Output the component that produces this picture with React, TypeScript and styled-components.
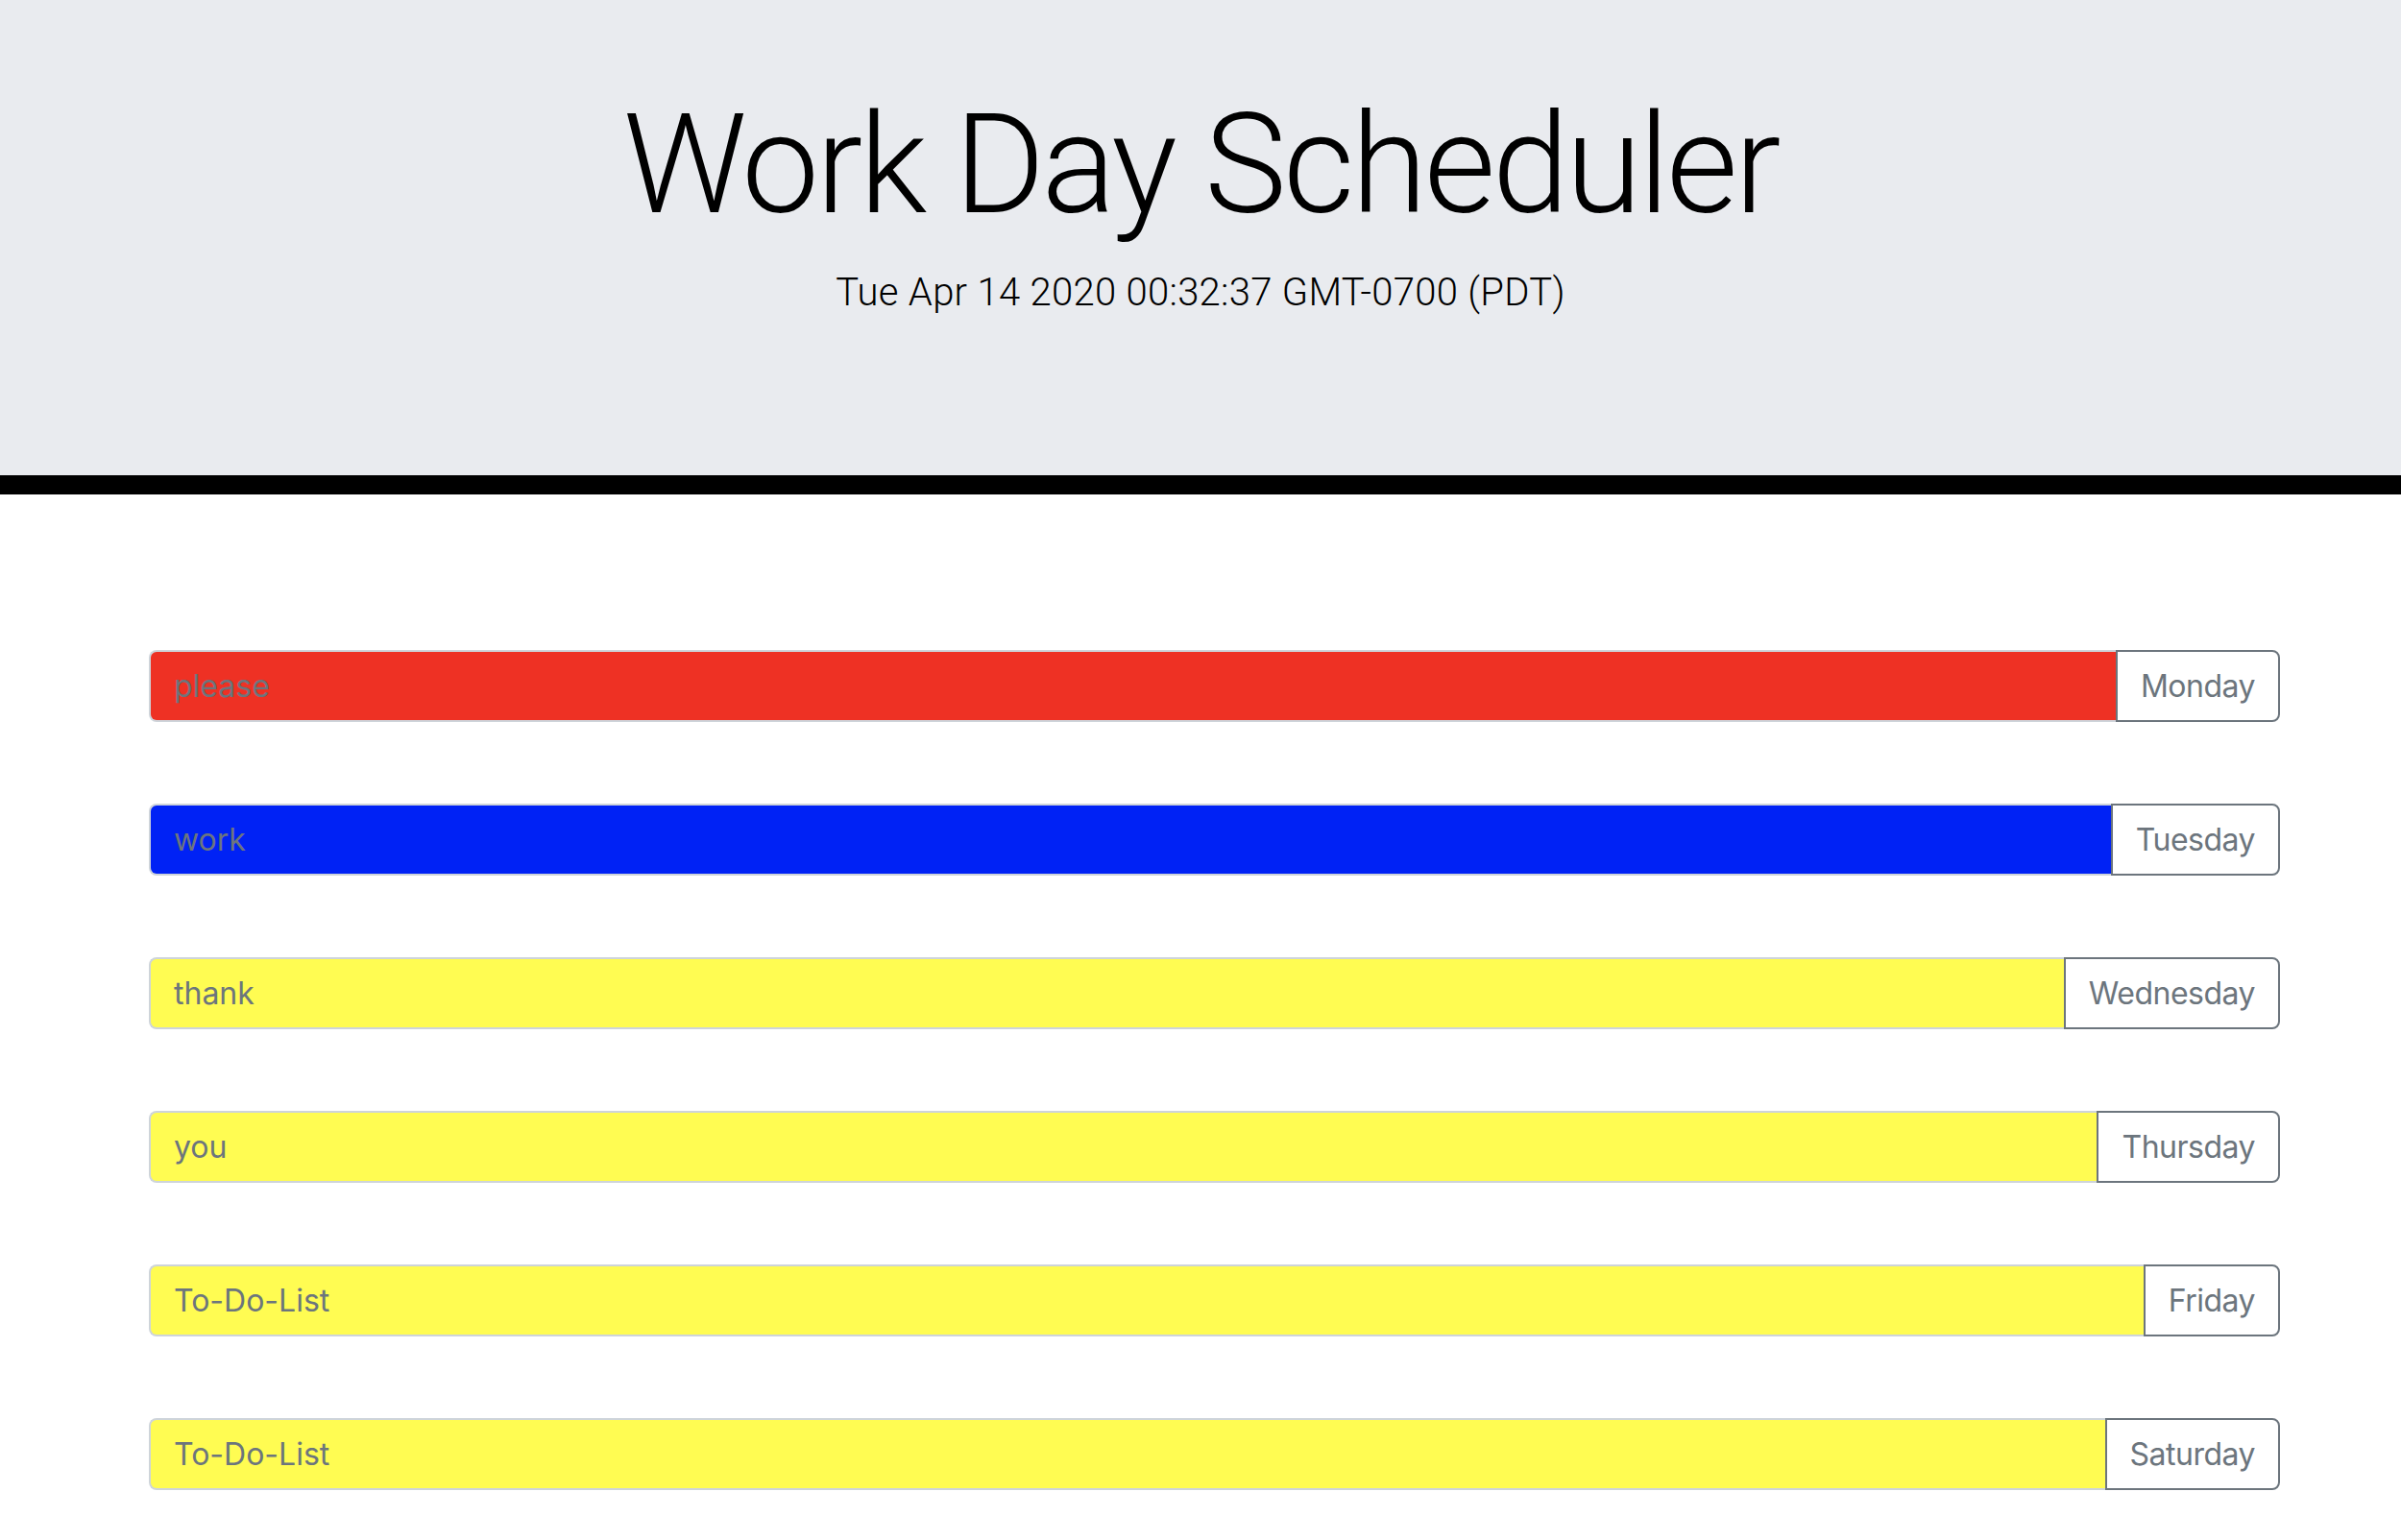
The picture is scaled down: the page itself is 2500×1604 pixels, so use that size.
import styled, { createGlobalStyle } from 'styled-components';

const GlobalStyle = createGlobalStyle`
	html,
	body {
		margin: 0;
		padding: 0;
		background: #fff;
		font-family: Inter, 'Liberation Sans', sans-serif;
	}
`;

const Header = styled.header`
	background: #e9ebef;
	border-bottom: 20px solid #000;
	padding: 86px 0 128px;
	text-align: center;
	font-family: Roboto, 'Liberation Sans', sans-serif;
	color: #000;

	h1 {
		margin: 0 0 16px;
		font-size: 144px;
		font-weight: 300;
		line-height: 1.2;
		letter-spacing: -3.4px;
	}

	p {
		margin: 0 0 32px;
		font-size: 40px;
		font-weight: 300;
		line-height: 1.5;
		letter-spacing: 0.3px;
	}
`;

const Planner = styled.main`
	display: flex;
	flex-direction: column;
	gap: 85px;
	padding: 162px 126px 60px 155px;
`;

const Row = styled.div`
	display: flex;
	height: 75px;
`;

const TaskInput = styled.input<{ $bg: string }>`
	flex: 1;
	min-width: 0;
	box-sizing: border-box;
	height: 100%;
	padding: 12px 24px;
	border: 2px solid #ced4da;
	border-right: none;
	border-radius: 8px 0 0 8px;
	background: ${(p) => p.$bg};
	font-family: Inter, 'Liberation Sans', sans-serif;
	font-size: 32px;
	color: #6c757d;
	outline: none;

	&::placeholder {
		color: #6c757d;
	}
`;

const DayLabel = styled.span`
	display: flex;
	align-items: center;
	box-sizing: border-box;
	height: 100%;
	padding: 0 24px;
	border: 2px solid #6c757d;
	border-radius: 0 8px 8px 0;
	background: #fff;
	font-size: 32px;
	letter-spacing: -0.5px;
	color: #6c757d;
	white-space: nowrap;
`;

const days = [
	{ day: 'Monday', text: 'please', bg: '#ee3124' },
	{ day: 'Tuesday', text: 'work', bg: '#0022f5' },
	{ day: 'Wednesday', text: 'thank', bg: '#fffc52' },
	{ day: 'Thursday', text: 'you', bg: '#fffc52' },
	{ day: 'Friday', text: 'To-Do-List', bg: '#fffc52' },
	{ day: 'Saturday', text: 'To-Do-List', bg: '#fffc52' },
];

const App = () => {
	return (
		<>
			<GlobalStyle />
			<Header>
				<h1>Work Day Scheduler</h1>
				<p>Tue Apr 14 2020 00:32:37 GMT-0700 (PDT)</p>
			</Header>
			<Planner>
				{days.map((d) => (
					<Row key={d.day}>
						<TaskInput $bg={d.bg} placeholder={d.text} />
						<DayLabel>{d.day}</DayLabel>
					</Row>
				))}
			</Planner>
		</>
	);
};

export default App;
